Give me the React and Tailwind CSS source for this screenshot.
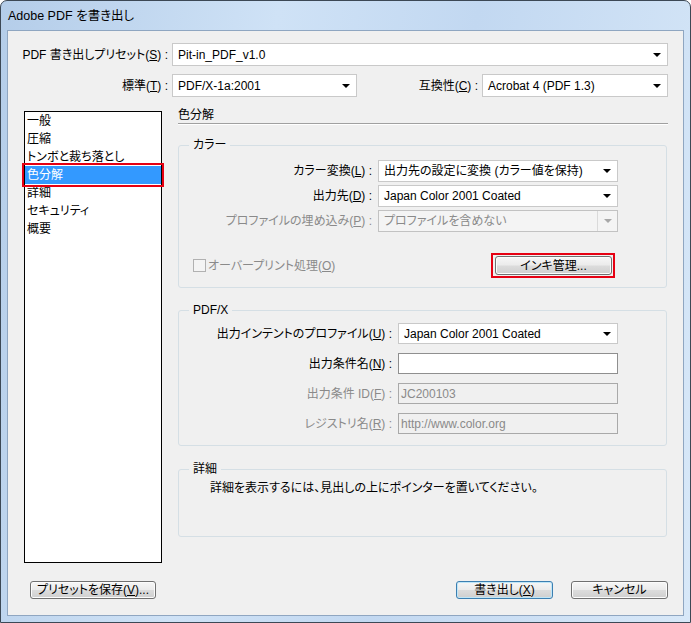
import React from "react";

const FONT = {
  fontFamily: '"Liberation Sans", "Noto Sans CJK JP", sans-serif',
};

const Arrow = ({ disabled }) => (
  <span
    className={
      "w-0 h-0 border-l-[4px] border-r-[4px] border-t-[4px] border-l-transparent border-r-transparent " +
      (disabled ? "border-t-[#a8a8a8]" : "border-t-black")
    }
  />
);

const Select = ({ value, className = "", disabled }) => (
  <div
    className={
      "flex items-center border " +
      (disabled ? "bg-[#f4f4f4] border-[#c2c2c2] text-[#8a8a8a]" : "bg-white border-[#c9c9c9] text-black") +
      " " +
      className
    }
  >
    <span className="flex-1 pl-[5px] truncate">{value}</span>
    {disabled ? (
      <span className="flex h-full w-[20px] items-center justify-center border-l border-[#dadada]">
        <Arrow disabled />
      </span>
    ) : (
      <span className="flex w-[20px] items-center justify-center">
        <Arrow />
      </span>
    )}
  </div>
);

const TextBox = ({ value = "", disabled, className = "" }) => (
  <div
    className={
      "flex items-center border pl-[2px] " +
      (disabled ? "bg-[#f0f0f0] border-[#a9a9a9] text-[#8a8a8a]" : "bg-white border-[#8f8f8f]") +
      " " +
      className
    }
  >
    {value}
  </div>
);

const Btn = ({ children, className = "", primary }) => (
  <button
    type="button"
    className={
      "flex items-center justify-center rounded-[3px] border bg-[linear-gradient(#f6f6f6_0%,#ebebeb_48%,#dcdcdc_52%,#cfcfcf_100%)] text-black " +
      (primary ? "border-[#3c7fb1] shadow-[inset_0_0_0_1px_#bfe6f8]" : "border-[#707070] shadow-[inset_0_0_0_1px_#fcfcfc]") +
      " " +
      className
    }
  >
    {children}
  </button>
);

const Mn = ({ label, k, after = "" }) => (
  <>
    {label}(<u>{k}</u>){after}
  </>
);

const Group = ({ title, className = "", children }) => (
  <fieldset className={"rounded-[3px] border border-[#d5dfe5] " + className}>
    <legend className="ml-[10px] px-[4px] leading-[14px]">{title}</legend>
    {children}
  </fieldset>
);

const listItems = ["一般", "圧縮", "トンボと裁ち落とし", "色分解", "詳細", "セキュリティ", "概要"];

export default function App() {
  return (
    <div style={FONT} className="text-[12px] leading-[14px] text-black [font-feature-settings:'palt']">
      <div className="w-[691px] h-[623px] flex flex-col rounded-t-[7px] border border-[#3c4855] bg-[linear-gradient(100deg,#b4cde9_0%,#cfe2f6_35%,#c2d8f1_60%,#d8e8f8_100%)] px-[6px] pb-[6px]">
        {/* title */}
        <div className="h-[29px] flex items-center pl-[1px] text-[12.5px] text-black">
          Adobe PDF を書き出し
        </div>

        {/* client */}
        <div className="flex-1 flex flex-col border border-[#8fa6c1] bg-[#f0f0f0]">
          {/* preset row */}
          <div className="mt-[12px] flex items-center">
            <div className="w-[164px] pr-[4px] text-right whitespace-nowrap">
              PDF 書き出しプリセット(<u>S</u>) :
            </div>
            <Select value="Pit-in_PDF_v1.0" className="w-[496px] h-[23px]" />
          </div>

          <div className="mt-[8px] flex items-center">
            <div className="w-[164px] pr-[4px] text-right whitespace-nowrap">
              <Mn label="標準" k="T" /> :
            </div>
            <Select value="PDF/X-1a:2001" className="w-[185px] h-[23px]" />
            <div className="w-[125px] pr-[4px] text-right whitespace-nowrap">
              <Mn label="互換性" k="C" /> :
            </div>
            <Select value="Acrobat 4 (PDF 1.3)" className="w-[186px] h-[23px]" />
          </div>

          {/* body */}
          <div className="mt-[11px] flex items-start">
            <div className="ml-[16px] mt-[3px] w-[138px] h-[452px] border border-black bg-white">
              {listItems.map((it) =>
                it === "色分解" ? (
                  <div key={it} className="relative h-[18px] flex items-center pl-[2px] bg-[#3399ff] text-white">
                    {it}
                    <span className="absolute -left-[3px] -right-[3px] -top-[3px] -bottom-[3px] border-2 border-[#e60012]" />
                  </div>
                ) : (
                  <div key={it} className="h-[18px] flex items-center pl-[2px] whitespace-nowrap">
                    {it}
                  </div>
                )
              )}
            </div>

            <div className="ml-[16px] w-[490px] flex flex-col">
              <div className="h-[16px] border-b border-[#a0a0a0]">色分解</div>
              <div className="h-px bg-white" />

              <Group title="カラー" className="mt-[13px] w-[489px]">
                <div className="pt-[8px] grid grid-cols-[199px_240px] gap-y-[3px]">
                  <div className="pr-[6px] text-right self-center whitespace-nowrap">
                    <Mn label="カラー変換" k="L" /> :
                  </div>
                  <Select value="出力先の設定に変換 (カラー値を保持)" className="h-[22px]" />
                  <div className="pr-[6px] text-right self-center whitespace-nowrap">
                    <Mn label="出力先" k="D" /> :
                  </div>
                  <Select value="Japan Color 2001 Coated" className="h-[22px]" />
                  <div className="pr-[6px] text-right self-center whitespace-nowrap text-[#8a8a8a]">
                    <Mn label="プロファイルの埋め込み" k="P" /> :
                  </div>
                  <Select value="プロファイルを含めない" disabled className="h-[22px]" />
                </div>
                <div className="mt-[21px] pb-[9px] flex items-center">
                  <span className="ml-[14px] w-[13px] h-[13px] border border-[#b1b1b1] bg-[#f4f4f4]" />
                  <span className="ml-[2px] text-[#8a8a8a]">
                    オーバープリント処理(<u>O</u>)
                  </span>
                  <div className="ml-auto mr-[51px] border-2 border-[#e60012] pl-[2px] pr-[1px] py-[1px]">
                    <Btn className="w-[117px] h-[19px]">インキ管理...</Btn>
                  </div>
                </div>
              </Group>

              <Group title="PDF/X" className="mt-[15px] w-[489px]">
                <div className="pt-[6px] pb-[11px] grid grid-cols-[219px_220px] gap-y-[9px]">
                  <div className="pr-[6px] text-right self-center whitespace-nowrap">
                    <Mn label="出力インテントのプロファイル" k="U" /> :
                  </div>
                  <Select value="Japan Color 2001 Coated" className="h-[21px]" />
                  <div className="pr-[6px] text-right self-center whitespace-nowrap">
                    <Mn label="出力条件名" k="N" /> :
                  </div>
                  <TextBox className="h-[21px]" />
                  <div className="pr-[6px] text-right self-center whitespace-nowrap text-[#8a8a8a]">
                    <Mn label="出力条件 ID" k="F" /> :
                  </div>
                  <TextBox value="JC200103" disabled className="h-[21px]" />
                  <div className="pr-[6px] text-right self-center whitespace-nowrap text-[#8a8a8a]">
                    <Mn label="レジストリ名" k="R" /> :
                  </div>
                  <TextBox value="http://www.color.org" disabled className="h-[21px]" />
                </div>
              </Group>

              <Group title="詳細" className="mt-[16px] w-[489px] h-[75px]">
                <div className="pt-[5px] pl-[31px]">
                  詳細を表示するには、見出しの上にポインターを置いてください。
                </div>
              </Group>
            </div>
          </div>

          {/* footer */}
          <div className="mt-[18px] flex items-center pr-[15px]">
            <Btn className="ml-[22px] w-[126px] h-[18px]">
              プリセットを保存(<u>V</u>)...
            </Btn>
            <Btn primary className="ml-auto w-[97px] h-[18px]">
              書き出し(<u>X</u>)
            </Btn>
            <Btn className="ml-[18px] w-[97px] h-[18px]">キャンセル</Btn>
          </div>
        </div>
      </div>
    </div>
  );
}
